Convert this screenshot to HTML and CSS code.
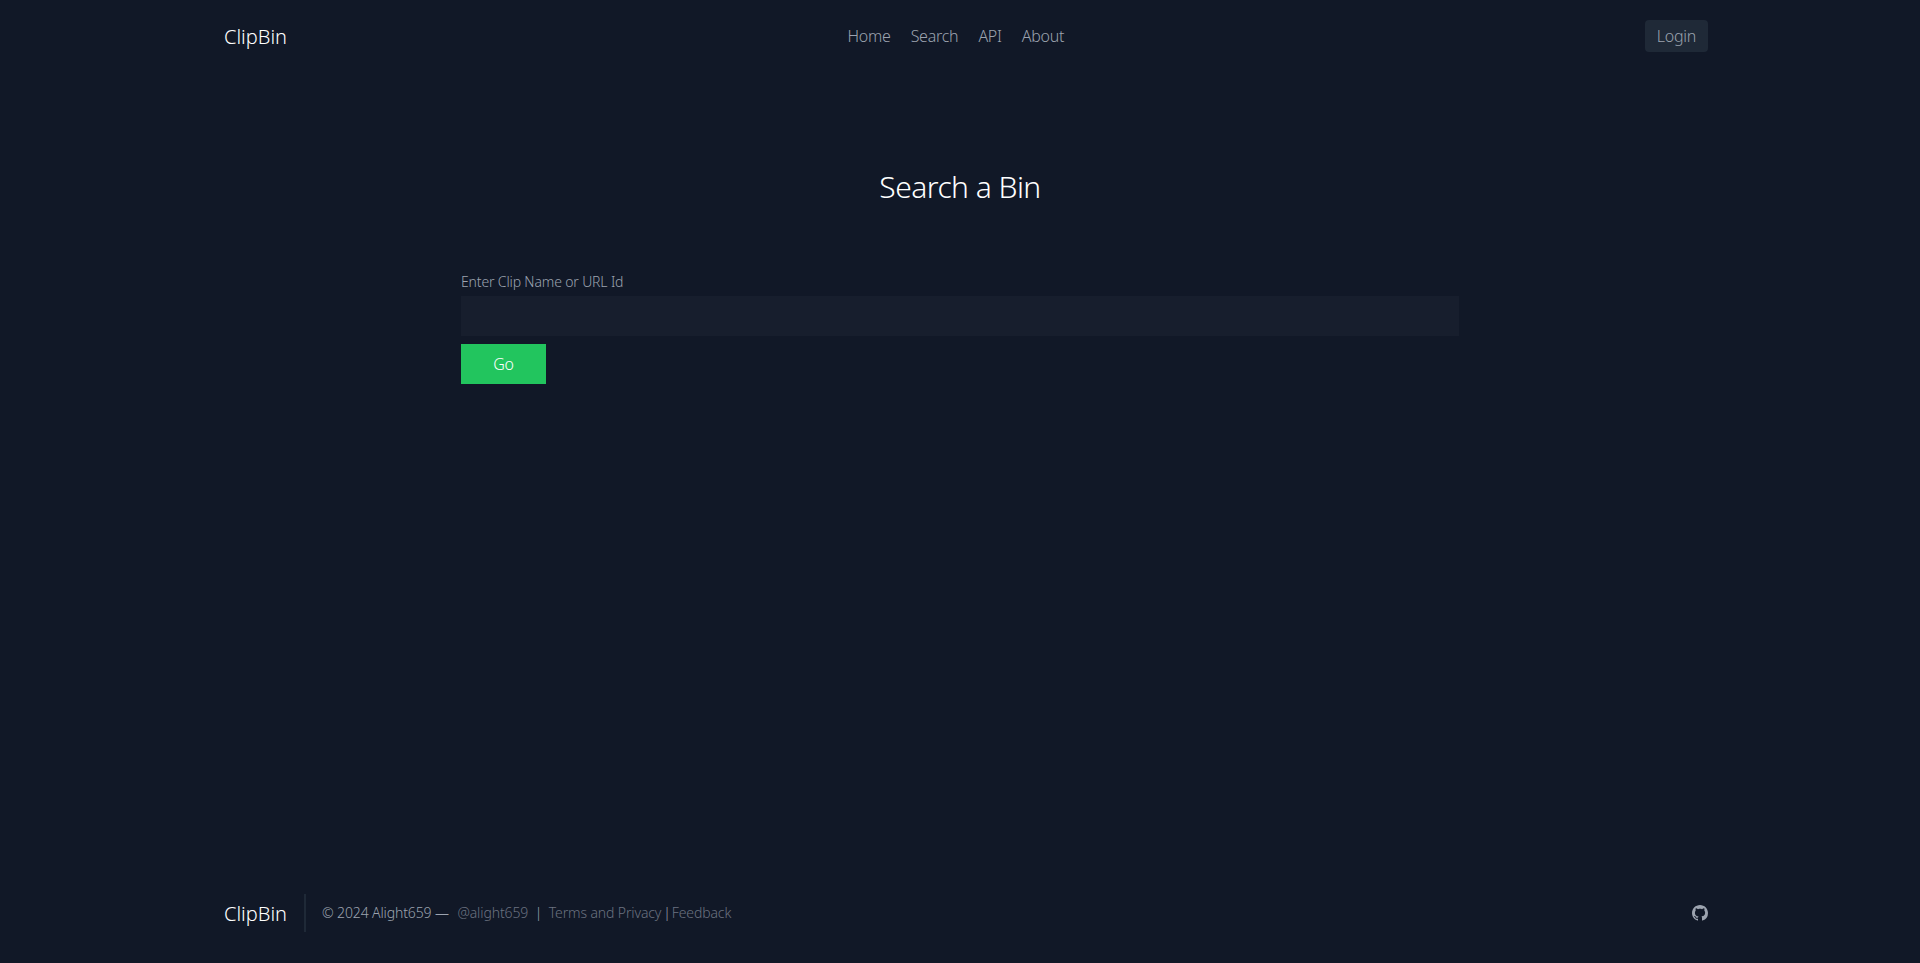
FILE: index.html
```html
<!DOCTYPE html>
<html lang="en">
<head>
    <meta charset="UTF-8">
    <meta name="viewport" content="width=device-width, initial-scale=1.0">
    <title>ClipBin</title>
    <link rel="stylesheet" href="styles.css">
</head>
<body>

<header class="navbar">
    <a class="logo" href="#">ClipBin</a>
    <nav class="nav-links">
        <a href="#">Home</a>
        <a href="#">Search</a>
        <a href="#">API</a>
        <a href="#">About</a>
    </nav>
    <div class="nav-end">
        <button class="login-btn" type="button">Login</button>
    </div>
</header>

<main class="search-section">
    <h1>Search a Bin</h1>
    <form class="search-form">
        <label for="clipname">Enter Clip Name or URL Id</label>
        <input type="text" id="clipname" name="clipname">
        <button class="go-btn" type="button">Go</button>
    </form>
</main>

<footer class="footer">
    <a class="logo" href="#">ClipBin</a>
    <p class="footer-text">
        © 2024 Alight659 —
        <a class="footer-handle" href="#">@alight659</a>
        <span class="footer-sep">|</span>
        <a href="#">Terms and Privacy</a><span class="footer-pipe">|</span><a href="#">Feedback</a>
    </p>
    <a class="github" href="#" aria-label="GitHub">
        <svg viewBox="0 0 16 16" width="16" height="16" fill="currentColor">
            <path d="M8 0C3.58 0 0 3.58 0 8c0 3.54 2.29 6.53 5.47 7.59.4.07.55-.17.55-.38 0-.19-.01-.82-.01-1.49-2.01.37-2.53-.49-2.69-.94-.09-.23-.48-.94-.82-1.13-.28-.15-.68-.52-.01-.53.63-.01 1.08.58 1.23.82.72 1.21 1.87.87 2.33.66.07-.52.28-.87.51-1.07-1.78-.2-3.64-.89-3.64-3.95 0-.87.31-1.59.82-2.15-.08-.2-.36-1.02.08-2.12 0 0 .67-.21 2.2.82.64-.18 1.32-.27 2-.27s1.36.09 2 .27c1.53-1.04 2.2-.82 2.2-.82.44 1.1.16 1.92.08 2.12.51.56.82 1.27.82 2.15 0 3.07-1.87 3.75-3.65 3.95.29.25.54.73.54 1.48 0 1.07-.01 1.93-.01 2.2 0 .21.15.46.55.38A8.01 8.01 0 0 0 16 8c0-4.42-3.58-8-8-8z"/>
        </svg>
    </a>
</footer>

</body>
</html>
```

FILE: styles.css
```css
* {
    box-sizing: border-box;
}
body {
    font-family: "Noto Sans", sans-serif;
    font-weight: 300;
    letter-spacing: -0.016em;
    margin: 0;
    min-height: 100vh;
    display: flex;
    flex-direction: column;
    background-color: #111827;
    color: #9ca3af;
}
a {
    color: inherit;
    text-decoration: none;
}
.navbar {
    width: 1536px;
    margin: 0 auto;
    padding: 20px;
    display: flex;
    align-items: center;
}
.logo {
    margin-left: 12px;
    padding-top: 2px;
    font-size: 20px;
    line-height: 28px;
    letter-spacing: 0;
    color: #fff;
}
.nav-links {
    flex: 1;
    display: flex;
    justify-content: center;
    gap: 20px;
    font-size: 16px;
    line-height: 24px;
    padding-right: 20px;
}
.login-btn {
    font: inherit;
    letter-spacing: inherit;
    font-size: 16px;
    line-height: 24px;
    color: #9ca3af;
    background-color: #1f2937;
    border: none;
    border-radius: 4px;
    padding: 4px 12px;
}
.search-section {
    flex: 1;
    padding-top: 97px;
}
.search-section h1 {
    margin: 0 0 63px;
    text-align: center;
    color: #fff;
    font-size: 30px;
    line-height: 36px;
    font-weight: 300;
    letter-spacing: -0.55px;
}
.search-form {
    width: 998px;
    margin: 0 auto;
    display: flex;
    flex-direction: column;
    align-items: flex-start;
}
.search-form label {
    font-size: 14px;
    line-height: 28px;
    letter-spacing: -0.15px;
}
.search-form input {
    width: 100%;
    height: 40px;
    background-color: #171e2d;
    border: none;
    color: #f3f4f6;
}
.go-btn {
    margin-top: 8px;
    width: 85px;
    height: 40px;
    background-color: #22c55e;
    border: none;
    color: #fff;
    font: inherit;
    letter-spacing: inherit;
    font-size: 16px;
}
.footer {
    width: 1536px;
    margin: 0 auto;
    padding: 0 20px 31px;
    display: flex;
    align-items: center;
}
.footer-text {
    margin: 0 0 0 17px;
    padding: 8px 0 8px 16px;
    border-left: 2px solid #1f2937;
    font-size: 14px;
    line-height: 22px;
    letter-spacing: -0.12px;
    flex: 1;
}
.footer-handle {
    margin-left: 5px;
}
.footer-sep {
    margin: 0 3px;
}
.footer-pipe {
    margin: 0 1px 0 2px;
}
.footer-text a {
    color: #6b7280;
}
.github {
    color: #9ca3af;
    display: flex;
}
```
